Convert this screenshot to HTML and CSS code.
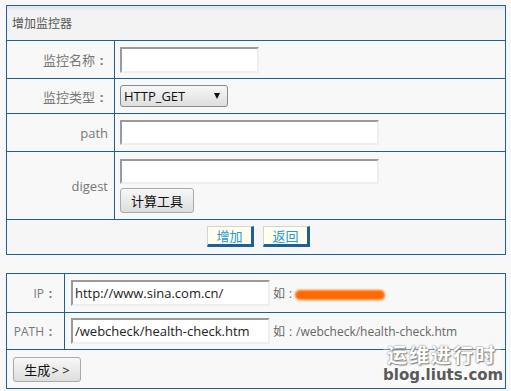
FILE: index.html
```html
<!DOCTYPE html>
<html lang="zh-CN">
<head>
  <meta charset="UTF-8" />
  <title>增加监控器</title>
  <link rel="stylesheet" href="styles.css">
</head>
<body>
  <table class="form-table">
    <tr class="head-row"><th colspan="2">增加监控器</th></tr>
    <tr class="row-name">
      <td class="label">监控名称<span class="colon">:</span></td>
      <td><input type="text" class="field field-short"></td>
    </tr>
    <tr class="row-type">
      <td class="label">监控类型<span class="colon">:</span></td>
      <td>
        <span class="select-wrap">
          <select class="select">
            <option>HTTP_GET</option>
          </select>
        </span>
      </td>
    </tr>
    <tr class="row-path">
      <td class="label">path</td>
      <td><input type="text" class="field field-long"></td>
    </tr>
    <tr class="row-digest">
      <td class="label">digest</td>
      <td>
        <input type="text" class="field field-long">
        <br>
        <button class="btn-grey btn-calc">计算工具</button>
      </td>
    </tr>
    <tr class="row-actions">
      <td colspan="2">
        <div class="actions">
          <button class="btn-link">增加</button>
          <button class="btn-link">返回</button>
        </div>
      </td>
    </tr>
  </table>

  <table class="gen-table">
    <tr class="row-ip">
      <td class="label">IP<span class="colon">:</span></td>
      <td>
        <input type="text" class="field field-mid" value="http://www.sina.com.cn/"><span class="hint">如<span class="colon">:</span><span class="redact"></span></span>
      </td>
    </tr>
    <tr class="row-pathx">
      <td class="label">PATH<span class="colon">:</span></td>
      <td>
        <input type="text" class="field field-mid" value="/webcheck/health-check.htm"><span class="hint">如<span class="colon">:</span>/webcheck/health-check.htm</span>
      </td>
    </tr>
    <tr class="row-gen">
      <td colspan="2"><button class="btn-grey btn-gen">生成<span class="arrows">&gt; &gt;</span></button></td>
    </tr>
  </table>

  <div class="watermark">
    <div class="wm-cn">运维进行时</div>
    <div class="wm-en">blog.liuts.com</div>
  </div>
</body>
</html>
```

FILE: styles.css
```css
body {
  margin: 0;
  padding: 5px 5px 0 6px;
  background-color: #f8f8f8;
  font-family: "Open Sans", "Noto Sans CJK SC", sans-serif;
  font-size: 12px;
  color: #666;
  position: relative;
  height: 386px;
  overflow: hidden;
}
table {
  width: 500px;
  border-collapse: collapse;
}
td, th {
  border: 1px solid #1e5f96;
  padding: 0;
}
.head-row th {
  height: 34px;
  text-align: left;
  padding-left: 5px;
  font-weight: normal;
  color: #555;
  background: linear-gradient(#d9dee6 0, #eceef1 3px, #f3f3f3 6px);
}
.label {
  width: 101px;
  text-align: right;
  padding-right: 6px;
  color: #777;
  font-size: 13px;
}
.colon {
  display: inline-block;
  width: 13px;
  text-align: center;
  font-weight: bold;
}
.row-name td { height: 37px; }
.row-type td { height: 34px; }
.row-path td { height: 37px; }
.row-digest td { height: 66px; }
.row-actions td { height: 34px; background: #f6f6f6; }
.form-table td:not(.label) { padding-left: 5px; }
.field {
  box-sizing: border-box;
  height: 26px;
  border-style: solid;
  border-width: 2px;
  border-color: #9a9a9a #eeeeee #eeeeee #9a9a9a;
  background: #fff;
  padding: 1px 2px;
  font-family: "Open Sans", sans-serif;
  font-size: 13px;
  color: #222;
  outline: none;
  vertical-align: middle;
}
.field-short { width: 139px; }
.field-long { width: 259px; height: 25px; }
.field-mid { width: 199px; height: 26px; }
.select-wrap {
  position: relative;
  display: inline-block;
  vertical-align: middle;
}
.select {
  appearance: none;
  -webkit-appearance: none;
  box-sizing: border-box;
  width: 108px;
  height: 22px;
  border: 1px solid #8a8a8a;
  border-radius: 3px;
  background: linear-gradient(#f7f7f7, #dedede);
  padding: 0 0 0 3px;
  font-family: "Open Sans", sans-serif;
  font-size: 13px;
  color: #111;
}
.select-wrap::after {
  content: "";
  position: absolute;
  right: 8px;
  top: 8px;
  border-left: 3px solid transparent;
  border-right: 3px solid transparent;
  border-top: 6px solid #111;
  pointer-events: none;
}
.btn-grey {
  box-sizing: border-box;
  border: 1px solid #a9a9a9;
  border-radius: 3px;
  background: linear-gradient(#f8f8f8, #dddddd);
  font-family: "Noto Sans CJK SC", sans-serif;
  font-size: 13px;
  color: #111;
  padding: 0;
}
.btn-calc {
  width: 74px;
  height: 25px;
  margin-top: 4px;
}
.row-digest td:not(.label) { padding-top: 1px; }
.actions {
  display: flex;
  justify-content: center;
  gap: 9px;
  padding-top: 4px;
  height: 30px;
  box-sizing: border-box;
}
.btn-link {
  box-sizing: border-box;
  width: 47px;
  height: 21px;
  margin: 0;
  padding: 0;
  background: #ffffee;
  border-style: solid;
  border-width: 1px 3px 3px 1px;
  border-color: #d4d4d4 #1e5f96 #1e5f96 #d4d4d4;
  color: #2499d6;
  font-family: "Noto Sans CJK SC", sans-serif;
  font-size: 13px;
  line-height: 16px;
  cursor: pointer;
}
.gen-table {
  margin-top: 18px;
}
.gen-table .label {
  width: 50px;
  padding-right: 7px;
  font-size: 12px;
}
.gen-table td:not(.label) { padding-left: 6px; }
.row-ip td { height: 38px; }
.row-pathx td { height: 36px; }
.row-gen td { height: 38px; padding-left: 6px; }
.hint {
  font-size: 12px;
  color: #666;
  vertical-align: middle;
  margin-left: 3px;
}
.hint .colon {
  width: 11px;
  font-weight: normal;
}
.redact {
  display: inline-block;
  width: 90px;
  height: 10px;
  border-radius: 5px;
  background: #ff6a00;
  filter: blur(1px);
  vertical-align: middle;
  margin-left: -1px;
}
.btn-gen {
  width: 68px;
  height: 25px;
}
.arrows {
  font-family: "Open Sans", sans-serif;
  margin-left: 1px;
}
.watermark {
  position: absolute;
  left: 383px;
  top: 344px;
  width: 118px;
  padding-bottom: 2px;
  text-align: center;
  background: rgba(255, 255, 255, 0.35);
}
.wm-cn {
  font-family: "Noto Sans CJK SC", sans-serif;
  font-weight: bold;
  font-size: 20px;
  letter-spacing: 2px;
  line-height: 22px;
  margin-bottom: 1px;
  color: #fff;
  text-shadow: 0 0 2px #666, 1px 1px 1px #888;
}
.wm-en {
  font-family: "DejaVu Sans", sans-serif;
  font-weight: bold;
  font-size: 15px;
  line-height: 16px;
  color: #5a5a5a;
  text-shadow: 0 0 2px #fff;
}
```
